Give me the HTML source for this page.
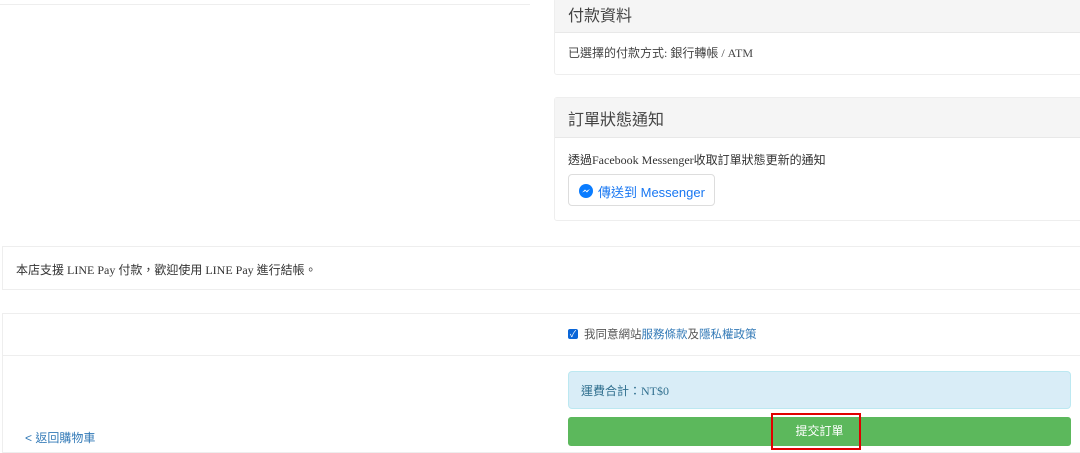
<!DOCTYPE html>
<html><head><meta charset="utf-8"><style>
body{margin:0;width:1080px;height:450px;overflow:hidden;background:#fff;font-family:"Liberation Serif","Noto Sans CJK TC",serif;color:#333;position:relative}
.a{position:absolute;box-sizing:border-box}
.sans{font-family:"Liberation Sans","Noto Sans CJK TC",sans-serif}
</style></head><body>
<div class="a" style="left:0;top:4px;width:530px;height:1px;background:#eee"></div>

<div class="a" style="left:554px;top:-2px;width:530px;height:77px;border:1px solid #eee;border-radius:3px">
 <div class="a sans" style="left:0;top:0;width:100%;height:34px;background:#f5f5f5;border-bottom:1px solid #e8e8e8;padding:3px 13px;font-size:16px;color:#444">付款資料</div>
 <div class="a" style="left:13px;top:45px;font-size:12px;color:#444">已選擇的付款方式: 銀行轉帳 / ATM</div>
</div>

<div class="a" style="left:554px;top:97px;width:530px;height:124px;border:1px solid #eee;border-radius:3px">
 <div class="a sans" style="left:0;top:0;width:100%;height:40px;background:#f5f5f5;border-bottom:1px solid #e8e8e8;padding:8px 13px;font-size:16px;color:#444">訂單狀態通知</div>
 <div class="a" style="left:13px;top:53px;font-size:12px;color:#333">透過Facebook Messenger收取訂單狀態更新的通知</div>
 <div class="a sans" style="left:13px;top:76px;width:147px;height:32px;border:1px solid #ddd;border-radius:4px;font-size:13px;color:#1877f2;padding:7px 0 0 29px;white-space:nowrap">傳送到 Messenger
  <svg class="a" style="left:10px;top:9px" width="14" height="14" viewBox="0 0 14 14"><circle cx="7" cy="7" r="7" fill="#0a7cff"/><path d="M3 8.5L6 5.5L7.5 7L11 5L8 8.5L6.5 7Z" fill="#fff"/></svg>
 </div>
</div>

<div class="a" style="left:2px;top:246px;width:1080px;height:44px;border:1px solid #eee">
 <div class="a" style="left:13px;top:14px;font-size:12px;color:#333">本店支援 LINE Pay 付款，歡迎使用 LINE Pay 進行結帳。</div>
</div>

<div class="a" style="left:2px;top:313px;width:1080px;height:140px;border:1px solid #eee"></div>
<div class="a" style="left:2px;top:355px;width:1080px;height:1px;background:#eee"></div>
<div class="a sans" style="left:568px;top:329px;width:10px;height:10px;background:#0a66d8;border-radius:2px;color:#fff;font-size:9px;line-height:10px;text-align:center">✓</div>
<div class="a sans" style="left:584px;top:326px;font-size:11.5px;color:#555">我同意網站<span style="color:#337ab7">服務條款</span>及<span style="color:#337ab7">隱私權政策</span></div>

<div class="a" style="left:568px;top:371px;width:503px;height:38px;background:#d9edf7;border:1px solid #bce8f1;border-radius:4px;padding:10px 12px;font-size:12px;color:#31708f">運費合計：NT$0</div>
<div class="a sans" style="left:568px;top:417px;width:503px;height:29px;background:#5cb85c;border-radius:3px;color:#fff;font-size:12px;text-align:center;line-height:29px">提交訂單</div>
<div class="a" style="left:771px;top:413px;width:90px;height:37px;border:2px solid #e00000"></div>

<div class="a sans" style="left:25px;top:429px;font-size:12px;color:#337ab7">&lt; 返回購物車</div>
</body></html>
